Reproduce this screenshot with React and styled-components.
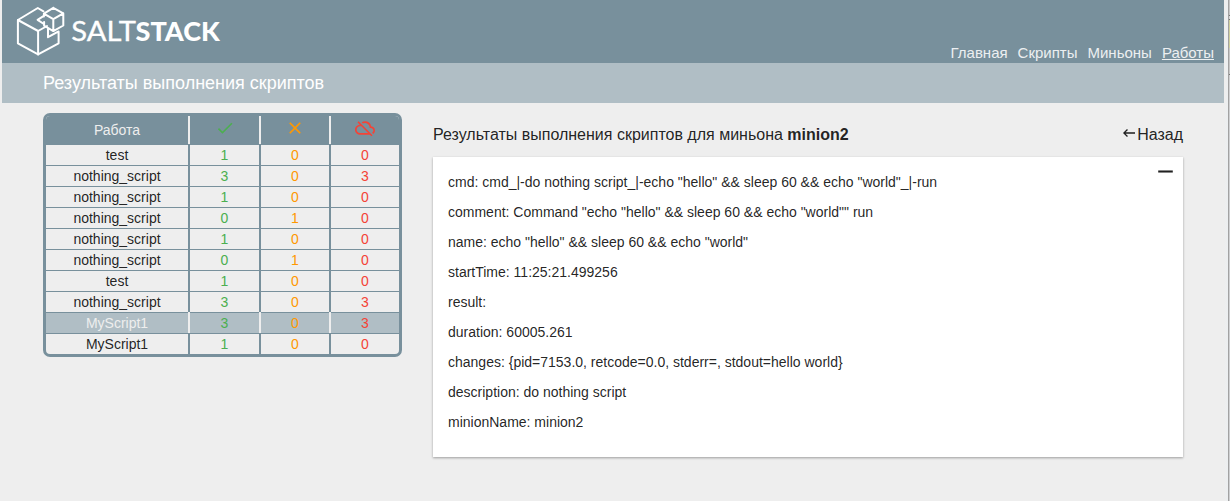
import React from "react";
import styled, { createGlobalStyle, css } from "styled-components";
import { MdCheck, MdClear, MdCloudOff, MdKeyboardBackspace, MdRemove } from "react-icons/md";

const GlobalStyle = createGlobalStyle`
  *, *::before, *::after { box-sizing: border-box; }
  body {
    margin: 0;
    background: #eeeeee;
    color: rgba(0, 0, 0, 0.87);
    font-family: "Liberation Sans", Arial, sans-serif;
    font-size: 14px;
    overflow: hidden;
  }
`;

const Window = styled.div`
  display: flex;
  height: 501px;
  padding-left: 2px;
`;

const Page = styled.div`
  flex: 1;
  min-width: 0;
`;

const Gutter = styled.div`
  width: 4px;
  background: linear-gradient(to right, #eeeeee, #eceff1);
`;

const EdgeStrip = styled.div`
  display: flex;
  flex-direction: column;
  width: 2px;
  border-left: 1px solid #a2a2a2;
`;

const EdgePart = styled.div`
  height: ${(p) => p.$h}px;
  background: ${(p) => p.$color};
`;

const Header = styled.header`
  display: flex;
  justify-content: space-between;
  height: 63px;
  background: #78909c;
`;

const Nav = styled.nav`
  display: flex;
  align-items: flex-end;
  gap: 10px;
  padding: 0 10px 1px 0;
`;

const NavLink = styled.a`
  color: #eceff1;
  font-size: 15px;
  line-height: 18px;
  text-decoration: ${(p) => (p.$active ? "underline" : "none")};
`;

const TitleBar = styled.div`
  height: 40px;
  padding-left: 41px;
  background: #b0bec5;
  color: #ffffff;
  font-size: 18px;
  line-height: 40px;
`;

const Content = styled.main`
  display: flex;
  align-items: flex-start;
  gap: 31px;
  padding: 10px 41px 0;
`;

const Table = styled.div`
  flex: none;
  width: 359px;
  border: 3px solid #78909c;
  border-radius: 7px;
  overflow: hidden;
`;

const Row = styled.div`
  display: grid;
  grid-template-columns: 144px 71px 70px 68px;
  height: 21px;
  border-bottom: 1px solid #78909c;
  line-height: 20px;
  text-align: center;

  &:last-child {
    height: 20px;
    border-bottom: 0;
  }

  ${(p) =>
    p.$selected &&
    css`
      background: #b0bec5;
      color: #eeeeee;
    `}

  ${(p) =>
    p.$head &&
    css`
      height: 29px;
      background: #78909c;
      color: #eeeeee;
      line-height: 28px;
    `}
`;

const tones = { ok: "#4caf50", fail: "#ff9800", off: "#f44336" };

const Cell = styled.div`
  color: ${(p) => tones[p.$tone] || "inherit"};
  border-right: 2px solid ${(p) => (p.$light ? "#eeeeee" : "#78909c")};

  &:last-child {
    border-right: 0;
  }

  ${(p) =>
    p.$raised &&
    css`
      margin-top: -1px;
      padding-top: 1px;
      border-image: linear-gradient(#eeeeee, #eeeeee) 1;
      background: linear-gradient(#78909c, #78909c) top / 100% 1px no-repeat;
    `}

  svg {
    display: block;
    margin: 2px auto 0;
  }
`;

const Details = styled.section`
  flex: 1;
  min-width: 0;
`;

const DetailsHead = styled.div`
  display: flex;
  justify-content: space-between;
  height: 44px;
  padding-top: 12px;
  font-size: 16px;
  line-height: 19px;
`;

const BackLink = styled.a`
  display: flex;
  color: inherit;
`;

const Card = styled.div`
  display: flex;
  justify-content: space-between;
  height: 300px;
  padding: 10px 5px 0 15px;
  background: #ffffff;
  box-shadow: 0 1px 3px rgba(0, 0, 0, 0.12), 0 1px 2px rgba(0, 0, 0, 0.24);
`;

const Field = styled.div`
  height: 30px;
  line-height: 30px;
`;

const CollapseButton = styled.div`
  height: 25px;
  margin-top: -8px;
`;

const LogoSvg = styled.svg`
  display: block;
  margin-left: 8px;
`;

const Logo = () => (
  <LogoSvg width="220" height="63" viewBox="10 0 220 63" fill="none" stroke="#fff">
    <g strokeWidth="2" strokeLinejoin="round" strokeLinecap="round">
      <path d="M43.5 11.3 37.8 8 17.9 20v23.3l20.2 11.1 20.5-11.1V31.4L48 37.2V29" />
      <path d="m17.9 20 20.2 11v23.4M38.1 31l8.9-5M43 16.4 37.6 19.8l6.3 4.2" />
      <path d="m53.3 7.8 10 5.5v12.2l-10 5.6-9.2-5.4V22M43.9 13.6l9.4-5.8M43.9 13.6l9.4 5.6 10-5.9M53.3 19.2v11.9M43.9 13.6v3" />
    </g>
    <g fill="#fff" fontFamily="Lato, sans-serif" fontSize="26">
      <text x="71.3" y="40.6" fontWeight="400" strokeWidth="0.3" textLength="64.7" lengthAdjust="spacingAndGlyphs">SALT</text>
      <text x="135.5" y="40.6" fontWeight="900" stroke="none" textLength="84.2" lengthAdjust="spacingAndGlyphs">STACK</text>
    </g>
  </LogoSvg>
);

const links = ["Главная", "Скрипты", "Миньоны", "Работы"];

const jobs = [
  ["test", 1, 0, 0],
  ["nothing_script", 3, 0, 3],
  ["nothing_script", 1, 0, 0],
  ["nothing_script", 0, 1, 0],
  ["nothing_script", 1, 0, 0],
  ["nothing_script", 0, 1, 0],
  ["test", 1, 0, 0],
  ["nothing_script", 3, 0, 3],
  ["MyScript1", 3, 0, 3],
  ["MyScript1", 1, 0, 0],
];
const selectedJob = 8;
const columns = ["name", "ok", "fail", "off"];

const fields = [
  'cmd: cmd_|-do nothing script_|-echo "hello" && sleep 60 && echo "world"_|-run',
  'comment: Command "echo "hello" && sleep 60 && echo "world"" run',
  'name: echo "hello" && sleep 60 && echo "world"',
  "startTime: 11:25:21.499256",
  "result:",
  "duration: 60005.261",
  "changes: {pid=7153.0, retcode=0.0, stderr=, stdout=hello world}",
  "description: do nothing script",
  "minionName: minion2",
];

export default function App() {
  return (
    <>
      <GlobalStyle />
      <Window>
        <Page>
          <Header>
            <Logo />
            <Nav>
              {links.map((label) => (
                <NavLink key={label} $active={label === "Работы"}>{label}</NavLink>
              ))}
            </Nav>
          </Header>
          <TitleBar>Результаты выполнения скриптов</TitleBar>
          <Content>
            <Table>
              <Row $head>
                <Cell $light>Работа</Cell>
                <Cell $light $tone="ok"><MdCheck size={20} /></Cell>
                <Cell $light $tone="fail"><MdClear size={20} /></Cell>
                <Cell $tone="off"><MdCloudOff size={20} /></Cell>
              </Row>
              {jobs.map((job, i) => (
                <Row key={i} $selected={i === selectedJob}>
                  {job.map((value, c) => (
                    <Cell key={c} $tone={columns[c]} $raised={i === selectedJob && c < 3}>
                      {value}
                    </Cell>
                  ))}
                </Row>
              ))}
            </Table>
            <Details>
              <DetailsHead>
                <span>Результаты выполнения скриптов для миньона <b>minion2</b></span>
                <BackLink><MdKeyboardBackspace size={16} />Назад</BackLink>
              </DetailsHead>
              <Card>
                <div>
                  {fields.map((text) => <Field key={text}>{text}</Field>)}
                </div>
                <CollapseButton><MdRemove size={25} /></CollapseButton>
              </Card>
            </Details>
          </Content>
        </Page>
        <Gutter />
        <EdgeStrip>
          <EdgePart $h={15} $color="#c8c8c8" />
          <EdgePart $h={1} $color="#777777" />
          <EdgePart $h={3} $color="#d6d6d6" />
          <EdgePart $h={1} $color="#777777" />
          <EdgePart $h={28} $color="#d2d2a0" />
          <EdgePart $h={26} $color="#c8c8c8" />
          <EdgePart $h={1} $color="#777777" />
          <EdgePart $h={426} $color="#cfd0d2" />
        </EdgeStrip>
      </Window>
    </>
  );
}
